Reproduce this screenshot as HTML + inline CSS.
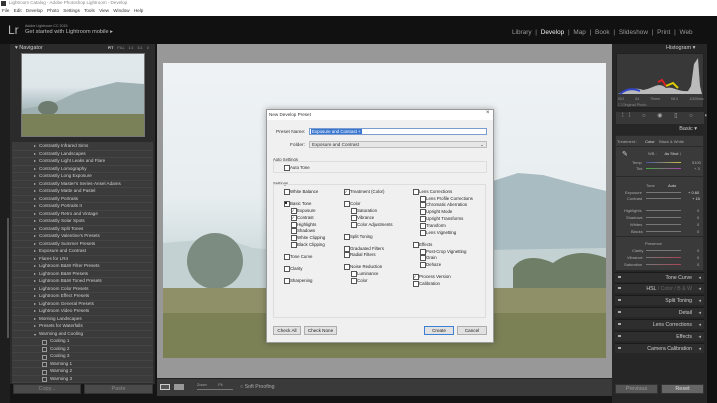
<!DOCTYPE html>
<html><head><meta charset="utf-8"><style>
*{margin:0;padding:0;box-sizing:border-box}
body{width:717px;height:403px;overflow:hidden;background:#151515;font-family:"Liberation Sans",sans-serif;position:relative}
.a{position:absolute;white-space:nowrap}
.t5{font-size:5px}
.lst div{height:7.5px;font-size:4.6px;color:#cfcfcf;padding-left:27px;position:relative;border-bottom:1px solid #444}
.lst div:before{content:"";position:absolute;left:22px;top:2px;border-left:2px solid #bbb;border-top:1.3px solid transparent;border-bottom:1.3px solid transparent}
.lst div.o:before{border-left:1.3px solid transparent;border-right:1.3px solid transparent;border-top:2px solid #bbb;border-bottom:0;top:3px}
.lst div.s{padding-left:38px}.lst div.s:before{left:30px;top:1.5px;width:3px;height:3px;border:0.5px solid #999}
.cb{position:absolute;font-size:4.4px;color:#222;padding-left:6px;line-height:5px;white-space:nowrap}
.cb:before{content:"";position:absolute;left:0;top:0;width:4px;height:4px;border:0.6px solid #555;background:#fff}
.cb.k:after{content:"✓";position:absolute;left:0.5px;top:-0.5px;font-size:4px;color:#333}
.cb.f:after{content:"";position:absolute;left:1.2px;top:1.2px;width:2px;height:2px;background:#222}
.btn{position:absolute;height:9px;border:0.6px solid #adadad;background:#e1e1e1;font-size:4.6px;color:#222;text-align:center;line-height:8px}
.hdr{position:absolute;left:615px;width:89px;height:10px;background:#2e2e2e;border-top:1px solid #1a1a1a;font-size:5.2px;color:#ccc;text-align:right;padding-right:12px;line-height:10px}
.hdr:after{content:"◂";position:absolute;right:3px;font-size:5px;color:#aaa}
.hdr:before{content:"";position:absolute;left:3px;top:3px;width:3px;height:2px;background:#aaa}
.sl{position:absolute;font-size:4px;color:#aaa}
</style></head><body>
<!-- windows chrome -->
<div class="a" style="left:0;top:0;width:717px;height:16px;background:#fff"></div>
<div class="a" style="left:1px;top:1px;width:5px;height:5px;background:#333"></div>
<div class="a t5" style="left:9px;top:0;font-size:4.5px;color:#888">Lightroom Catalog - Adobe Photoshop Lightroom - Develop</div>
<div class="a" style="left:2px;top:8px;font-size:4.6px;color:#333;word-spacing:3px">File Edit Develop Photo Settings Tools View Window Help</div>
<!-- top bar -->
<div class="a" style="left:0;top:16px;width:717px;height:28px;background:#111"></div>
<div class="a" style="left:8px;top:23px;font-size:12px;color:#bbb">Lr</div>
<div class="a" style="left:25px;top:24px;font-size:3.6px;color:#999">Adobe Lightroom CC 2015</div>
<div class="a" style="left:25px;top:29px;font-size:5.6px;color:#bbb">Get started with Lightroom mobile ▸</div>
<div class="a" style="left:512px;top:29px;font-size:6.4px;color:#999;word-spacing:2px">Library | <b style="color:#eee;font-weight:normal">Develop</b> | Map | Book | Slideshow | Print | Web</div>
<!-- left side -->
<div class="a" style="left:0;top:44px;width:10px;height:359px;background:#1e1e1e"></div>
<div class="a" style="left:7px;top:218px;width:2px;height:120px;background:#555"></div>
<div class="a" style="left:10px;top:44px;width:145px;height:340px;background:#2b2b2b"></div>
<div class="a" style="left:15px;top:45px;font-size:5.5px;color:#ccc">▾ Navigator</div>
<div class="a" style="left:108px;top:46px;font-size:3.6px;color:#999;word-spacing:3px"><b style="color:#ddd">FIT</b> FILL 1:1 3:1 ⇕</div>
<div class="a" style="left:21px;top:53px;width:124px;height:84px;border:1px solid #777;background:linear-gradient(#e2e9ec 0%,#dde6ea 40%,#b5c5c8 60%,#a9b9b6 70%,#8a9070 75%,#6b7550 100%)"></div>
<svg class="a" style="left:22px;top:54px" width="122" height="82"><path d="M0 55 L30 50 L55 38 L75 33 L95 28 L122 30 L122 62 L0 62Z" fill="#9fb0b2"/><ellipse cx="26" cy="54" rx="10" ry="7" fill="#6d7c6e"/><rect x="0" y="60" width="122" height="22" fill="#7a8058"/></svg>
<div class="a" style="left:12px;top:142px;width:141px;height:241px;background:#3b3b3b;overflow:hidden">
<div class="lst" style="padding-top:1px">
<div>Contrastly Infrared Sims</div><div>Contrastly Landscapes</div><div>Contrastly Light Leaks and Flare</div><div>Contrastly Lomography</div><div>Contrastly Long Exposure</div><div>Contrastly Master's Series-Ansel Adams</div><div>Contrastly Matte and Pastel</div><div>Contrastly Portraits</div><div>Contrastly Portraits II</div><div>Contrastly Retro and Vintage</div><div>Contrastly Solar Spots</div><div>Contrastly Split Tones</div><div>Contrastly Valentine's Presets</div><div>Contrastly Summer Presets</div><div>Exposure and Contrast</div><div>Flares for LR4</div><div>Lightroom B&amp;W Filter Presets</div><div>Lightroom B&amp;W Presets</div><div>Lightroom B&amp;W Toned Presets</div><div>Lightroom Color Presets</div><div>Lightroom Effect Presets</div><div>Lightroom General Presets</div><div>Lightroom Video Presets</div><div>Morning Landscapes</div><div>Presets for Waterfalls</div><div class="o">Warming and Cooling</div><div class="s">Cooling 1</div><div class="s">Cooling 2</div><div class="s">Cooling 3</div><div class="s">Warming 1</div><div class="s">Warming 2</div><div class="s">Warming 3</div>
</div></div>
<div class="btn" style="left:13px;top:384px;width:68px;height:10px;background:#4a4a4a;border-color:#333;color:#888;font-size:5.5px">Copy...</div>
<div class="btn" style="left:84px;top:384px;width:69px;height:10px;background:#4a4a4a;border-color:#333;color:#888;font-size:5.5px">Paste</div>
<!-- center -->
<div class="a" style="left:157px;top:44px;width:455px;height:334px;background:#989898"></div>
<div class="a" style="left:163px;top:63px;width:443px;height:295px;background:linear-gradient(#eef2f4 0%,#e8eef0 45%,#d5e0e3 60%,#c7d3d3 75%,#9fa17d 80%,#7f845c 100%)"></div>
<svg class="a" style="left:163px;top:63px" width="443" height="295"><path d="M300 160 L330 118 L355 110 L380 112 L410 120 L443 128 L443 230 L300 230Z" fill="#a9bcc1"/><path d="M0 180 L60 175 L90 185 L150 190 L443 185 L443 230 L0 232Z" fill="#c4d1d2"/><ellipse cx="52" cy="198" rx="28" ry="28" fill="#7d8c80"/><path d="M350 205 C360 190 380 195 390 200 C410 185 430 190 443 195 L443 225 L350 225Z" fill="#6f7e66"/><rect x="0" y="225" width="443" height="70" fill="#8f9068"/><rect x="0" y="250" width="443" height="45" fill="#7b8055"/></svg>
<div class="a" style="left:157px;top:378px;width:455px;height:18px;background:#3a3a3a;border-top:1px solid #222"></div>
<div class="a" style="left:160px;top:384px;width:10px;height:6px;border:1px solid #ccc;background:#555"></div>
<div class="a" style="left:174px;top:384px;width:10px;height:6px;background:#999"></div>
<div class="a" style="left:197px;top:383px;font-size:3.8px;color:#aaa">Zoom &nbsp;&nbsp;&nbsp;&nbsp;&nbsp;&nbsp;&nbsp;&nbsp;&nbsp;&nbsp;Fit</div>
<div class="a" style="left:197px;top:389px;width:36px;height:1px;background:#777"></div>
<div class="a" style="left:240px;top:384px;font-size:5.2px;color:#aaa">○ Soft Proofing</div>
<!-- right panel -->
<div class="a" style="left:612px;top:44px;width:95px;height:359px;background:#262626"></div>
<div class="a" style="left:707px;top:44px;width:10px;height:359px;background:#111"></div>
<div class="a" style="left:666px;top:45px;font-size:5.5px;color:#ccc">Histogram ▾</div>
<div class="a" style="left:616px;top:53px;width:88px;height:55px;background:#383838;border:1px solid #222"></div>
<svg class="a" style="left:618px;top:56px" width="84" height="40"><path d="M0 38 C10 33 18 31 25 34 C35 33 40 25 48 32 C55 30 60 36 70 35 L73 30 L76 8 L80 2 L82 30 L84 38Z" fill="#bbb"/><path d="M2 38 C8 33 15 32 22 35" stroke="#3346c8" stroke-width="2" fill="none"/><path d="M40 26 L44 24 L48 30" stroke="#d22" stroke-width="2" fill="none"/><path d="M48 30 L55 27 L60 32" stroke="#dc0" stroke-width="2" fill="none"/></svg>
<div class="a" style="left:618px;top:97px;font-size:3.6px;color:#999;word-spacing:10px">ISO 64 70mm f/8.0 1/320sec</div>
<div class="a" style="left:618px;top:102px;font-size:3.8px;color:#888">☐ Original Photo</div>
<div class="a" style="left:616px;top:112px;width:88px;height:12px;background:#383838;font-size:6px;color:#aaa;letter-spacing:5px;padding-left:6px">⁞⁞ ○ ◉ ▯ ○ ◐</div>
<div class="a" style="left:612px;top:126px;width:95px;height:8px;font-size:5.5px;color:#ccc;text-align:right;padding-right:10px">Basic ▾</div>
<div class="a" style="left:615px;top:135px;width:89px;height:136px;background:#3a3a3a;border:1px solid #2a2a2a"></div>
<div class="sl" style="left:617px;top:139px">Treatment : &nbsp;&nbsp;&nbsp;&nbsp;&nbsp;&nbsp;<span style="color:#ddd">Color</span> &nbsp;&nbsp;&nbsp;Black &amp; White</div>
<div class="a" style="left:615px;top:146px;width:89px;height:1px;background:#2a2a2a"></div>
<div class="sl" style="left:622px;top:150px;font-size:7px;color:#ccc">✎</div>
<div class="sl" style="left:648px;top:151px">WB : &nbsp;&nbsp;&nbsp;&nbsp;&nbsp;&nbsp;<span style="color:#ddd">As Shot ⁞</span></div>
<div class="sl" style="left:632px;top:160px">Temp</div><div class="a" style="left:646px;top:162px;width:35px;height:1px;background:linear-gradient(90deg,#45a,#cb4)"></div><div class="sl" style="left:692px;top:160px">5100</div>
<div class="sl" style="left:636px;top:166px">Tint</div><div class="a" style="left:646px;top:168px;width:35px;height:1px;background:linear-gradient(90deg,#4a4,#a4a)"></div><div class="sl" style="left:694px;top:166px">+ 3</div>
<div class="a" style="left:615px;top:176px;width:89px;height:1px;background:#2a2a2a"></div>
<div class="sl" style="left:646px;top:183px">Tone &nbsp;&nbsp;&nbsp;&nbsp;&nbsp;&nbsp;&nbsp;&nbsp;&nbsp;&nbsp;&nbsp;<span style="color:#ddd">Auto</span></div>
<div class="sl" style="left:625px;top:190px">Exposure</div><div class="a" style="left:646px;top:192px;width:35px;height:1px;background:#777"></div><div class="sl" style="left:688px;top:190px;color:#ddd">+ 0.60</div>
<div class="sl" style="left:627px;top:196px">Contrast</div><div class="a" style="left:646px;top:198px;width:35px;height:1px;background:#777"></div><div class="sl" style="left:692px;top:196px;color:#ddd">+ 15</div>
<div class="sl" style="left:624px;top:208px">Highlights</div><div class="a" style="left:646px;top:210px;width:35px;height:1px;background:#777"></div><div class="sl" style="left:697px;top:208px">0</div>
<div class="sl" style="left:626px;top:215px">Shadows</div><div class="a" style="left:646px;top:217px;width:35px;height:1px;background:#777"></div><div class="sl" style="left:697px;top:215px">0</div>
<div class="sl" style="left:630px;top:222px">Whites</div><div class="a" style="left:646px;top:224px;width:35px;height:1px;background:#777"></div><div class="sl" style="left:697px;top:222px">0</div>
<div class="sl" style="left:631px;top:229px">Blacks</div><div class="a" style="left:646px;top:231px;width:35px;height:1px;background:#777"></div><div class="sl" style="left:697px;top:229px">0</div>
<div class="a" style="left:615px;top:236px;width:89px;height:1px;background:#2a2a2a"></div>
<div class="sl" style="left:645px;top:241px">Presence</div>
<div class="sl" style="left:632px;top:248px">Clarity</div><div class="a" style="left:646px;top:250px;width:35px;height:1px;background:#777"></div><div class="sl" style="left:697px;top:248px">0</div>
<div class="sl" style="left:627px;top:255px">Vibrance</div><div class="a" style="left:646px;top:257px;width:35px;height:1px;background:linear-gradient(90deg,#777,#a45)"></div><div class="sl" style="left:697px;top:255px">0</div>
<div class="sl" style="left:624px;top:262px">Saturation</div><div class="a" style="left:646px;top:264px;width:35px;height:1px;background:linear-gradient(90deg,#777,#a45)"></div><div class="sl" style="left:697px;top:262px">0</div>
<div class="hdr" style="top:272px">Tone Curve</div>
<div class="hdr" style="top:283px"><span style="color:#ccc">HSL</span> <span style="color:#666">/ Color / B &amp; W</span></div>
<div class="hdr" style="top:295px">Split Toning</div>
<div class="hdr" style="top:307px">Detail</div>
<div class="hdr" style="top:319px">Lens Corrections</div>
<div class="hdr" style="top:331px">Effects</div>
<div class="hdr" style="top:343px">Camera Calibration</div>
<div class="btn" style="left:615px;top:384px;width:43px;height:10px;background:#555;border-color:#333;color:#999;font-size:5.5px">Previous</div>
<div class="btn" style="left:661px;top:384px;width:43px;height:10px;background:#666;border-color:#333;color:#ddd;font-size:5.5px">Reset</div>
<!-- dialog -->
<div class="a" style="left:266px;top:109px;width:228px;height:234px;background:#f0f0f0;border:1px solid #999;box-shadow:0 0 6px rgba(0,0,0,.3)"></div>
<div class="a" style="left:267px;top:110px;width:226px;height:10px;background:#fff"></div>
<div class="a" style="left:269px;top:112px;font-size:4.6px;color:#333">New Develop Preset</div>
<div class="a" style="left:486px;top:110px;font-size:6px;color:#444">×</div>
<div class="a" style="left:276px;top:130px;font-size:4.8px;color:#333">Preset Name:</div>
<div class="a" style="left:309px;top:128px;width:178px;height:7px;background:#fff;border:0.6px solid #7a9ccf"></div>
<div class="a" style="left:311px;top:129px;height:5px;padding:0 1px;background:#3a77d0;color:#fff;font-size:4.4px;line-height:5px">Exposure and Contrast +</div>
<div class="a" style="left:290px;top:143px;font-size:4.8px;color:#333">Folder:</div>
<div class="a" style="left:309px;top:141px;width:178px;height:7px;background:#e6e6e6;border:0.6px solid #bbb;font-size:4.6px;color:#333;padding-left:2px;line-height:6px">Exposure and Contrast<span style="float:right;padding-right:2px">⌄</span></div>
<div class="a" style="left:273px;top:157px;font-size:4.2px;color:#333">Auto Settings</div>
<div class="a" style="left:273px;top:161px;width:214px;height:12px;border:0.6px solid #ddd"></div>
<div class="cb" style="left:284px;top:165px">Auto Tone</div>
<div class="a" style="left:273px;top:181px;font-size:4.2px;color:#333">Settings</div>
<div class="a" style="left:273px;top:184px;width:213px;height:134px;border:0.6px solid #ddd"></div>
<div class="cb" style="left:284px;top:189px">White Balance</div>
<div class="cb f" style="left:284px;top:201px">Basic Tone</div>
<div class="cb k" style="left:291px;top:208px">Exposure</div>
<div class="cb k" style="left:291px;top:215px">Contrast</div>
<div class="cb" style="left:291px;top:222px">Highlights</div>
<div class="cb" style="left:291px;top:228px">Shadows</div>
<div class="cb" style="left:291px;top:235px">White Clipping</div>
<div class="cb" style="left:291px;top:242px">Black Clipping</div>
<div class="cb" style="left:284px;top:254px">Tone Curve</div>
<div class="cb" style="left:284px;top:266px">Clarity</div>
<div class="cb" style="left:284px;top:278px">Sharpening</div>
<div class="cb k" style="left:344px;top:189px">Treatment (Color)</div>
<div class="cb" style="left:344px;top:201px">Color</div>
<div class="cb" style="left:351px;top:208px">Saturation</div>
<div class="cb" style="left:351px;top:215px">Vibrance</div>
<div class="cb" style="left:351px;top:222px">Color Adjustments</div>
<div class="cb" style="left:344px;top:234px">Split Toning</div>
<div class="cb" style="left:344px;top:246px">Graduated Filters</div>
<div class="cb" style="left:344px;top:252px">Radial Filters</div>
<div class="cb" style="left:344px;top:264px">Noise Reduction</div>
<div class="cb" style="left:351px;top:271px">Luminance</div>
<div class="cb" style="left:351px;top:278px">Color</div>
<div class="cb" style="left:413px;top:189px">Lens Corrections</div>
<div class="cb" style="left:420px;top:196px">Lens Profile Corrections</div>
<div class="cb" style="left:420px;top:202px">Chromatic Aberration</div>
<div class="cb" style="left:420px;top:209px">Upright Mode</div>
<div class="cb" style="left:420px;top:216px">Upright Transforms</div>
<div class="cb" style="left:420px;top:223px">Transform</div>
<div class="cb" style="left:420px;top:230px">Lens Vignetting</div>
<div class="cb" style="left:413px;top:242px">Effects</div>
<div class="cb" style="left:420px;top:249px">Post-Crop Vignetting</div>
<div class="cb" style="left:420px;top:255px">Grain</div>
<div class="cb" style="left:420px;top:262px">Dehaze</div>
<div class="cb k" style="left:413px;top:274px">Process Version</div>
<div class="cb" style="left:413px;top:281px">Calibration</div>
<div class="btn" style="left:273px;top:326px;width:28px">Check All</div>
<div class="btn" style="left:304px;top:326px;width:33px">Check None</div>
<div class="btn" style="left:424px;top:326px;width:30px;border:1px solid #3c7fd6">Create</div>
<div class="btn" style="left:457px;top:326px;width:30px">Cancel</div>
</body></html>
